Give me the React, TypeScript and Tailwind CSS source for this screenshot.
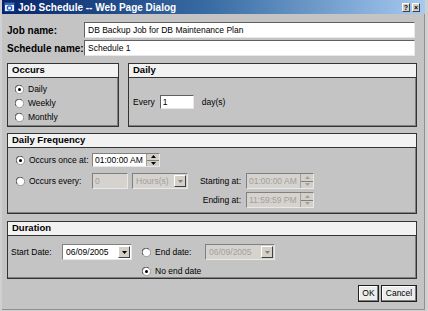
const font = { fontFamily: '"Liberation Sans", Arial, sans-serif' }

function Radio({ checked }: { checked?: boolean }) {
  return (
    <svg width="9" height="9" viewBox="0 0 12 12" className="shrink-0">
      <circle cx="6" cy="6" r="5.5" fill="#fff" stroke="#808080" />
      <path d="M1.5 9 A5 5 0 0 1 9 1.5" fill="none" stroke="#404040" strokeWidth="1" />
      {checked && <circle cx="6" cy="6" r="2" fill="#000" />}
    </svg>
  )
}

function Spinner({ disabled }: { disabled?: boolean }) {
  const c = disabled ? '#a0a0a0' : '#000'
  return (
    <div className="flex flex-col w-[13px] h-full border-l border-[#a0a0a0]">
      <div className="flex-1 flex items-center justify-center bg-[#d4d0c8] border-b border-[#808080]">
        <svg width="5" height="3" viewBox="0 0 5 3"><path d="M0 3 L2.5 0 L5 3 Z" fill={c} /></svg>
      </div>
      <div className="flex-1 flex items-center justify-center bg-[#d4d0c8]">
        <svg width="5" height="3" viewBox="0 0 5 3"><path d="M0 0 L2.5 3 L5 0 Z" fill={c} /></svg>
      </div>
    </div>
  )
}

function TimeBox({ value, disabled, h }: { value: string; disabled?: boolean; h: string }) {
  return (
    <div className={`flex w-[68px] ${h} border border-t-[#808080] border-l-[#808080] border-b-[#e8e8e8] border-r-[#e8e8e8] ${disabled ? 'bg-[#d6d3ce] text-[#a0a0a0]' : 'bg-white text-black'}`}>
      <div className="flex-1 flex items-center pl-[2px] text-[8.5px]">{value}</div>
      <Spinner disabled={disabled} />
    </div>
  )
}

function Select({ value, w, disabled }: { value: string; w: string; disabled?: boolean }) {
  return (
    <div className={`flex ${w} h-[16px] border border-t-[#808080] border-l-[#808080] border-b-[#e8e8e8] border-r-[#e8e8e8] ${disabled ? 'bg-[#d6d3ce] text-[#a0a0a0]' : 'bg-white text-black'}`}>
      <div className="flex-1 flex items-center pl-[3px] text-[8.5px]">{value}</div>
      <div className="w-[12px] m-[1px] flex items-center justify-center bg-[#d4d0c8] border border-t-white border-l-white border-b-[#404040] border-r-[#404040]">
        <svg width="5" height="3" viewBox="0 0 5 3"><path d="M0 0 L2.5 3 L5 0 Z" fill={disabled ? '#808080' : '#000'} /></svg>
      </div>
    </div>
  )
}

function Group({ title, className, children }: { title: string; className: string; children: React.ReactNode }) {
  return (
    <div className={`flex flex-col border border-[#333] shadow-[inset_-1px_-1px_0_#808080] ${className}`}>
      <div className="h-[14px] bg-[#f2f2f2] border-b border-[#333] flex items-center pl-[4px] text-[9.5px] font-bold text-black shrink-0">
        {title}
      </div>
      {children}
    </div>
  )
}

export default function App() {
  return (
    <div style={font} className="w-[428px] h-[311px] bg-[#d0d0d0] pb-[1px] pl-[2px] pr-[3px] flex flex-col text-black">
      <div className="h-[14px] shrink-0 flex items-center bg-gradient-to-r from-[#0a246a] via-[#3a6ea5] to-[#a6caf0] pl-[2px] pr-[5px]">
        <svg width="11" height="10" viewBox="0 0 11 10" className="shrink-0">
          <rect x="0.5" y="0.5" width="10" height="9" fill="#e8f0ff" stroke="#1c3f94" />
          <rect x="1" y="1" width="9" height="2" fill="#3a6ea5" />
          <circle cx="5.5" cy="6" r="2.2" fill="none" stroke="#1c5fd0" strokeWidth="1.2" />
        </svg>
        <span className="ml-[3px] text-white text-[10px] font-bold">Job Schedule -- Web Page Dialog</span>
        <div className="ml-auto flex gap-[2px]">
          <div className="w-[8px] h-[9px] bg-[#d4d0c8] border border-t-white border-l-white border-b-[#404040] border-r-[#404040] flex items-center justify-center text-[7px] font-bold leading-none">?</div>
          <div className="w-[8px] h-[9px] bg-[#d4d0c8] border border-t-white border-l-white border-b-[#404040] border-r-[#404040] flex items-center justify-center text-[7px] font-bold leading-none">×</div>
        </div>
      </div>
      <div className="flex-1 bg-[#c4c4c4] border-r border-b border-[#909090] pt-[8px] pl-[5px] pr-[7px] flex flex-col">
        <div className="flex items-center h-[16px]">
          <span className="w-[77px] text-[10px] font-bold">Job name:</span>
          <div className="flex-1 mr-[2px] h-full bg-white border border-t-[#606060] border-l-[#606060] border-b-[#e8e8e8] border-r-[#e8e8e8] flex items-center pl-[3px] text-[8.5px]">
            DB Backup Job for DB Maintenance Plan
          </div>
        </div>
        <div className="flex items-center h-[16px] mt-[2px]">
          <span className="w-[77px] text-[10px] font-bold">Schedule name:</span>
          <div className="flex-1 mr-[2px] h-full bg-white border border-t-[#606060] border-l-[#606060] border-b-[#e8e8e8] border-r-[#e8e8e8] flex items-center pl-[3px] text-[8.5px]">
            Schedule 1
          </div>
        </div>

        <div className="flex gap-[9px] mt-[7px] h-[64px]">
          <Group title="Occurs" className="w-[112px]">
            <div className="flex flex-col pt-[4px] pl-[7px] text-[8.5px]">
              {[['Daily', true], ['Weekly', false], ['Monthly', false]].map(([l, c]) => (
                <div key={l as string} className="flex items-center h-[14px] gap-[4px]">
                  <Radio checked={c as boolean} />
                  <span>{l}</span>
                </div>
              ))}
            </div>
          </Group>
          <Group title="Daily" className="flex-1">
            <div className="flex-1 flex items-center pl-[4px] text-[8.5px]">
              <span>Every</span>
              <div className="ml-[5px] w-[34px] h-[14px] bg-white border border-t-[#606060] border-l-[#606060] border-b-[#e8e8e8] border-r-[#e8e8e8] flex items-center pl-[2px]">1</div>
              <span className="ml-[8px]">day(s)</span>
            </div>
          </Group>
        </div>

        <Group title="Daily Frequency" className="mt-[6px] h-[81px]">
          <div className="flex flex-col pt-[5px] pl-[8px] text-[8.5px]">
            <div className="flex items-center h-[14px]">
              <div className="w-[76px] flex items-center gap-[4px]">
                <Radio checked />
                <span>Occurs once at:</span>
              </div>
              <TimeBox value="01:00:00 AM" h="h-[14px]" />
            </div>
            <div className="flex items-center h-[16px] mt-[6px]">
              <div className="w-[76px] flex items-center gap-[4px]">
                <Radio />
                <span>Occurs every:</span>
              </div>
              <div className="w-[36px] h-full bg-[#d6d3ce] text-[#a0a0a0] border border-t-[#808080] border-l-[#808080] border-b-[#e8e8e8] border-r-[#e8e8e8] flex items-center pl-[2px]">0</div>
              <div className="ml-[4px]"><Select value="Hours(s)" w="w-[56px]" disabled /></div>
              <span className="w-[58px] text-right pr-[5px]">Starting at:</span>
              <TimeBox value="01:00:00 AM" h="h-[16px]" disabled />
            </div>
            <div className="flex items-center h-[16px] mt-[3px]">
              <div className="w-[172px]" />
              <span className="w-[58px] text-right pr-[5px]">Ending at:</span>
              <TimeBox value="11:59:59 PM" h="h-[16px]" disabled />
            </div>
          </div>
        </Group>

        <Group title="Duration" className="mt-[7px] h-[58px]">
          <div className="flex flex-col pt-[8px] pl-[3px] text-[8.5px]">
            <div className="flex items-center h-[16px]">
              <span className="w-[51px]">Start Date:</span>
              <Select value="06/09/2005" w="w-[70px]" />
              <div className="ml-[10px] w-[63px] flex items-center gap-[4px]">
                <Radio />
                <span>End date:</span>
              </div>
              <Select value="06/09/2005" w="w-[70px]" disabled />
            </div>
            <div className="flex items-center h-[14px] mt-[4px] pl-[131px] gap-[4px]">
              <Radio checked />
              <span>No end date</span>
            </div>
          </div>
        </Group>

        <div className="flex justify-end gap-[2px] mt-[6px] text-[8.5px]">
          <div className="w-[21px] h-[17px] border border-[#202020] bg-[#ececec] shadow-[inset_-1px_-1px_0_#808080,inset_1px_1px_0_#fff] flex items-center justify-center">OK</div>
          <div className="w-[36px] h-[17px] border border-[#202020] bg-[#ececec] shadow-[inset_-1px_-1px_0_#808080,inset_1px_1px_0_#fff] flex items-center justify-center">Cancel</div>
        </div>
      </div>
    </div>
  )
}
